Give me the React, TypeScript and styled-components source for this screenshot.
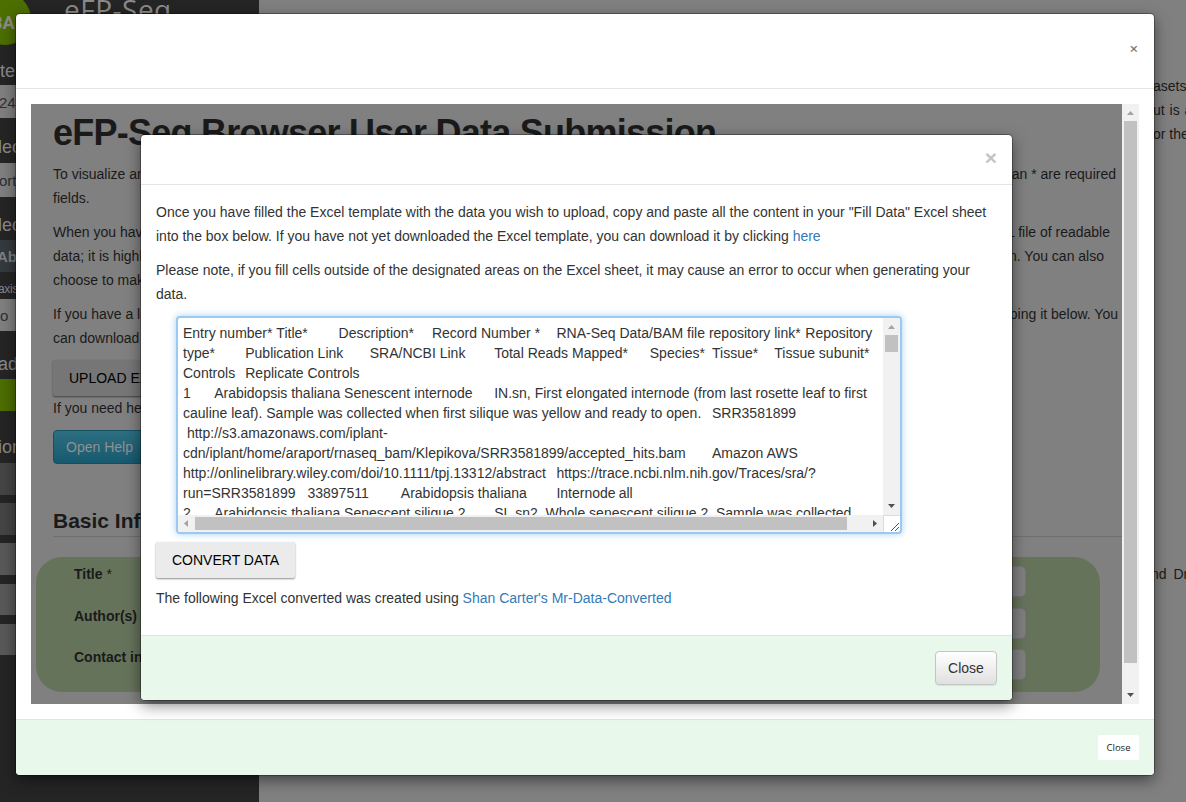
import React from 'react';
import styled, { createGlobalStyle, css } from 'styled-components';

const sans = '"Liberation Sans", Arial, Helvetica, sans-serif';
const ui = '"Open Sans", "Noto Sans", sans-serif';

const Global = createGlobalStyle`
  * { box-sizing: border-box; }
  html, body { margin: 0; padding: 0; overflow: hidden; background: #808080; }
  body { font-family: ${sans}; font-size: 14px; color: #333; }
`;

const Page = styled.div`
  position: relative;
  display: flex;
  justify-content: space-between;
  width: 1186px;
  height: 802px;
  overflow: hidden;
  background: #808080;
`;

const Sidebar = styled.aside`
  display: flex;
  flex-direction: column;
  width: 259px;
  height: 802px;
  background: #252525;
  overflow: hidden;
`;

const Brand = styled.div`
  display: flex;
  height: 57px;
`;

const Logo = styled.div`
  flex: none;
  width: 52px;
  height: 52px;
  margin: -7px 0 0 -21px;
  padding-left: 12px;
  border-radius: 50%;
  background: #4d6e00;
  color: #8c8c8c;
  font: bold 18px/59px "Roboto", ${sans};
`;

const BrandName = styled.div`
  margin: -12px 0 0 33px;
  color: #8a8a8a;
  font: 28px/42px ${ui};
  letter-spacing: 0.5px;
`;

const SideLabel = styled.div<{ $h: number; $size?: number; $drop?: number; $indent?: number; $track?: number }>`
  flex: none;
  height: ${p => p.$h}px;
  padding-top: ${p => p.$drop ?? 0}px;
  text-indent: ${p => p.$indent ?? 0}px;
  letter-spacing: ${p => p.$track ?? 0}px;
  color: #8a8a8a;
  font-size: ${p => p.$size ?? 18}px;
  line-height: ${p => p.$h - (p.$drop ?? 0)}px;
  white-space: nowrap;
`;

const SideBox = styled.div<{ $h: number; $bg: string; $fg?: string; $gap?: number; $bold?: boolean; $indent?: number }>`
  flex: none;
  height: ${p => p.$h}px;
  margin-bottom: ${p => p.$gap ?? 0}px;
  background: ${p => p.$bg};
  color: ${p => p.$fg ?? '#2b3035'};
  text-indent: ${p => p.$indent ?? 0}px;
  font-weight: ${p => (p.$bold ? 700 : 400)};
  font-size: 15px;
  line-height: ${p => p.$h + 2}px;
`;

const Aside = styled.div`
  width: 33px;
  padding-top: 74px;
  color: #1a1a1a;
  line-height: 24px;
  white-space: nowrap;
`;

const AsideWide = styled.div`
  word-spacing: 1px;
`;

const AsideLater = styled.div`
  margin-top: 416px;
  margin-left: -2px;
  word-spacing: 3px;
`;

const Dialog = styled.section`
  position: absolute;
  display: flex;
  flex-direction: column;
  background: #fff;
  border-radius: 4px;
  box-shadow: 0 5px 15px rgba(0, 0, 0, 0.5), 0 0 0 1px rgba(0, 0, 0, 0.3);
`;

const OuterDialog = styled(Dialog)`
  left: 16px;
  top: 14px;
  width: 1138px;
  height: 761px;
`;

const InnerDialog = styled(Dialog)`
  left: 110px;
  top: 31px;
  width: 871px;
  height: 565px;
`;

const Header = styled.header<{ $h: number }>`
  display: flex;
  flex: none;
  align-items: center;
  justify-content: flex-end;
  height: ${p => p.$h}px;
  border-bottom: 1px solid #e5e5e5;
`;

const Dismiss = styled.span<{ $small?: boolean }>`
  ${p => p.$small
    ? css`font: 600 15px/20px ${ui}; color: #777; padding: 0 16px 7px 0;`
    : css`font: bold 21px/20px ${sans}; color: #c4c4c4; padding: 0 15px 4px 0;`}
`;

const Footer = styled.footer<{ $h: number }>`
  display: flex;
  flex: none;
  align-items: center;
  justify-content: flex-end;
  height: ${p => p.$h}px;
  padding: 0 15px;
  border-top: 1px solid #e0e5e1;
  border-radius: 0 0 4px 4px;
  background: #e8f8ea;
`;

const SmallClose = styled.button`
  width: 41px;
  height: 25px;
  padding: 0;
  border: 0;
  border-radius: 2px;
  background: #fff;
  color: #222;
  font: 9.5px/25px ${ui};
`;

const LargeClose = styled.button`
  width: 62px;
  height: 34px;
  padding: 0;
  border: 1px solid #c4c4c4;
  border-radius: 4px;
  background: linear-gradient(#fff, #e0e0e0);
  box-shadow: 0 1px 1px rgba(0, 0, 0, 0.08);
  color: #333;
  font: 14px/20px ${sans};
`;

const Frame = styled.div`
  position: relative;
  display: flex;
  flex: none;
  height: 600px;
  margin: 15px;
`;

const Pane = styled.div`
  width: 1091px;
  height: 600px;
  background: #808080;
  color: #1a1a1a;
  overflow: hidden;
`;

const Prose = styled.div`
  padding: 0 0 0 22px;
  line-height: 24px;
`;

const Title = styled.h1`
  height: 58px;
  margin: 0;
  font: bold 36px/57px ${sans};
  letter-spacing: -0.75px;
  white-space: nowrap;
`;

const Lines = styled.div`
  margin-bottom: 10px;
`;

const Line = styled.div<{ $end?: number }>`
  display: flex;
  justify-content: space-between;
  height: 24px;
  padding-right: ${p => p.$end ?? 0}px;
  white-space: nowrap;
`;

const raised = css`
  border: 0;
  border-radius: 2px;
  font: 14px/36px ${sans};
  white-space: nowrap;
  text-align: left;
`;

const UploadButton = styled.button`
  ${raised}
  display: block;
  width: 150px;
  height: 36px;
  padding: 0 16px;
  background: #767676;
  box-shadow: 0 1px 2px rgba(0, 0, 0, 0.5);
  color: #000;
`;

const HelpButton = styled.button`
  display: block;
  width: 110px;
  height: 34px;
  margin-top: 10px;
  padding: 0 12px;
  border: 1px solid #154f63;
  border-radius: 4px;
  background: linear-gradient(#2d6f80, #17596f);
  color: #909090;
  font: 14px/32px ${sans};
  text-align: left;
`;

const Section = styled.h2`
  height: 41px;
  margin: 32px 0 20px;
  border-bottom: 1px solid #6f6f6f;
  font: bold 21px/49px ${sans};
`;

const Card = styled.div`
  display: flex;
  flex-direction: column;
  width: 1064px;
  height: 135px;
  margin-left: 5px;
  padding: 9px 74px 0 38px;
  border-radius: 26px;
  background: #66735b;
`;

const Field = styled.div<{ $h: number }>`
  display: flex;
  flex: none;
  justify-content: space-between;
  height: ${p => p.$h}px;
  font-weight: 700;
  line-height: 17px;
`;

const Star = styled.span`
  font-weight: 400;
`;

const Input = styled.div`
  width: 300px;
  height: 31px;
  border: 1px solid #747474;
  border-radius: 5px;
  background: #808080;
`;

const Track = styled.div<{ $row?: boolean }>`
  display: flex;
  flex: none;
  flex-direction: ${p => (p.$row ? 'row' : 'column')};
  align-items: center;
  ${p => (p.$row ? 'height: 17px; flex: 1;' : 'width: 17px;')}
  background: #f1f1f1;
`;

const Thumb = styled.div<{ $row?: boolean; $len: number }>`
  width: ${p => (p.$row ? p.$len : 13)}px;
  height: ${p => (p.$row ? 13 : p.$len)}px;
  margin: ${p => (p.$row ? '0 auto 0 0' : '0 0 auto')};
  background: #c1c1c1;
`;

const ArrowSvg = styled.svg`
  display: block;
  flex: none;
`;

type Dir = 'up' | 'down' | 'left' | 'right';
const arrows: Record<Dir, string> = {
  up: 'M5 11 L8.5 7 L12 11 Z',
  down: 'M5 6 L12 6 L8.5 10 Z',
  left: 'M10 5 L10 12 L6 8.5 Z',
  right: 'M7 5 L11 8.5 L7 12 Z',
};
const Arrow = ({ dir, off }: { dir: Dir; off?: boolean }) => (
  <ArrowSvg width="17" height="17" viewBox="0 0 17 17">
    <path d={arrows[dir]} fill={off ? '#a3a3a3' : '#505050'} />
  </ArrowSvg>
);

const Body = styled.div`
  flex: 1;
  padding: 15px;
  line-height: 24px;
`;

const Para = styled.p`
  margin: 0 0 10px;
  white-space: nowrap;
`;

const Link = styled.a`
  color: #337ab7;
`;

const TextBox = styled.div`
  display: flex;
  flex-direction: column;
  width: 726px;
  height: 218px;
  margin-left: 20px;
  border: 2px solid #9bc9ef;
  border-radius: 4px;
  box-shadow: 0 0 7px rgba(102, 175, 233, 0.6);
  background: #fff;
  overflow: hidden;
`;

const BoxRow = styled.div<{ $h: number }>`
  display: flex;
  flex: none;
  height: ${p => p.$h}px;
`;

const Content = styled.pre`
  flex: 1;
  margin: 0;
  padding: 5px 0 0 5px;
  overflow: hidden;
  font: 14px/20px ${sans};
  tab-size: 8;
  white-space: pre;
`;

const Grip = styled.div`
  width: 17px;
  height: 17px;
  border: solid #dcdcdc;
  border-width: 1px 0 0 1px;
`;

const GripLines = styled.svg`
  display: block;
`;

const ConvertButton = styled.button`
  ${raised}
  display: block;
  width: 139px;
  height: 36px;
  margin: 8px 0;
  padding: 0 16px;
  background: #ebebeb;
  box-shadow: 0 1px 2px rgba(0, 0, 0, 0.45);
  color: #000;
`;

const rows = [
  'Entry number*\tTitle*\tDescription*\tRecord Number *\tRNA-Seq Data/BAM file repository link*\tRepository',
  'type*\tPublication Link\tSRA/NCBI Link\tTotal Reads Mapped*\tSpecies*\tTissue*\tTissue subunit*',
  'Controls\tReplicate Controls',
  '1\tArabidopsis thaliana Senescent internode\tIN.sn, First elongated internode (from last rosette leaf to first',
  'cauline leaf). Sample was collected when first silique was yellow and ready to open.\tSRR3581899',
  ' http://s3.amazonaws.com/iplant-',
  'cdn/iplant/home/araport/rnaseq_bam/Klepikova/SRR3581899/accepted_hits.bam\tAmazon AWS',
  'http://onlinelibrary.wiley.com/doi/10.1111/tpj.13312/abstract\thttps://trace.ncbi.nlm.nih.gov/Traces/sra/?',
  'run=SRR3581899\t33897511\tArabidopsis thaliana\tInternode\tall',
  '2\tArabidopsis thaliana Senescent silique 2\tSL.sn2, Whole senescent silique 2. Sample was collected',
];

export default function App() {
  return (
    <Page>
      <Global />
      <Sidebar>
        <Brand>
          <Logo>BA</Logo>
          <BrandName>eFP-Seq</BrandName>
        </Brand>
        <SideLabel $h={28} $indent={0}>te</SideLabel>
        <SideBox $h={33} $bg="#808080" $indent={-1}>24</SideBox>
        <SideLabel $h={45} $drop={13} $indent={-2}>lec</SideLabel>
        <SideBox $h={34} $bg="#808080" $indent={-1}>ort</SideBox>
        <SideLabel $h={43} $drop={13} $indent={-2}>lec</SideLabel>
        <SideBox $h={32} $bg="#353a3e" $fg="#808080" $bold $indent={-3}>Ab</SideBox>
        <SideLabel $h={27} $drop={8} $size={12} $indent={-2} $track={-0.3}>axis</SideLabel>
        <SideBox $h={32} $bg="#808080">o</SideBox>
        <SideLabel $h={48} $drop={18} $indent={-2}>ad</SideLabel>
        <SideBox $h={32} $bg="#4d6e00" />
        <SideLabel $h={52} $drop={20} $indent={-2}>ion</SideLabel>
        <SideBox $h={32} $gap={8} $bg="#454545" />
        <SideBox $h={32} $gap={8} $bg="#454545" />
        <SideBox $h={32} $gap={9} $bg="#595959" />
        <SideBox $h={31} $gap={9} $bg="#595959" />
        <SideBox $h={31} $bg="#595959" />
      </Sidebar>
      <Aside>
        <div>asets</div>
        <AsideWide>ut is a</AsideWide>
        <div>or the</div>
        <AsideLater>nd Dr</AsideLater>
      </Aside>

      <OuterDialog>
        <Header $h={75}><Dismiss $small>×</Dismiss></Header>
        <Frame>
          <Pane>
            <Prose>
              <Title>eFP-Seq Browser User Data Submission</Title>
              <Lines>
                <Line $end={6}><span>To visualize any</span><span>an * are required</span></Line>
                <Line>fields.</Line>
              </Lines>
              <Lines>
                <Line $end={12}><span>When you have</span><span>XML file of readable</span></Line>
                <Line $end={18}><span>data; it is highly</span><span>n. You can also</span></Line>
                <Line>choose to make</Line>
              </Lines>
              <Lines>
                <Line $end={4}><span>If you have a lot</span><span>ping it below. You</span></Line>
                <Line>can download</Line>
              </Lines>
              <UploadButton>UPLOAD EXCEL</UploadButton>
              <Line>If you need help</Line>
              <HelpButton>Open Help</HelpButton>
              <Section>Basic Info</Section>
            </Prose>
            <Card>
              <Field $h={42}><span>Title <Star>*</Star></span><Input /></Field>
              <Field $h={41}><span>Author(s) <Star>*</Star></span><Input /></Field>
              <Field $h={41}><span>Contact info</span><Input /></Field>
            </Card>
          </Pane>
          <Track>
            <Arrow dir="up" off />
            <Thumb $len={542} />
            <Arrow dir="down" />
          </Track>

          <InnerDialog>
            <Header $h={50}><Dismiss>×</Dismiss></Header>
            <Body>
              <Para>
                Once you have filled the Excel template with the data you wish to upload, copy and paste all the content in your "Fill Data" Excel sheet<br />
                into the box below. If you have not yet downloaded the Excel template, you can download it by clicking <Link>here</Link>
              </Para>
              <Para>
                Please note, if you fill cells outside of the designated areas on the Excel sheet, it may cause an error to occur when generating your<br />
                data.
              </Para>
              <TextBox>
                <BoxRow $h={197}>
                  <Content>{rows.join('\n')}</Content>
                  <Track>
                    <Arrow dir="up" off />
                    <Thumb $len={17} />
                    <Arrow dir="down" />
                  </Track>
                </BoxRow>
                <BoxRow $h={17}>
                  <Track $row>
                    <Arrow dir="left" off />
                    <Thumb $row $len={652} />
                    <Arrow dir="right" />
                  </Track>
                  <Grip>
                    <GripLines width="16" height="16" viewBox="0 0 16 16">
                      <path d="M7 15 L15 7 M11 15 L15 11" stroke="#555" fill="none" />
                    </GripLines>
                  </Grip>
                </BoxRow>
              </TextBox>
              <ConvertButton>CONVERT DATA</ConvertButton>
              <Para>
                The following Excel converted was created using <Link>Shan Carter's Mr-Data-Converted</Link>
              </Para>
            </Body>
            <Footer $h={65}><LargeClose>Close</LargeClose></Footer>
          </InnerDialog>
        </Frame>
        <Footer $h={56}><SmallClose>Close</SmallClose></Footer>
      </OuterDialog>
    </Page>
  );
}
